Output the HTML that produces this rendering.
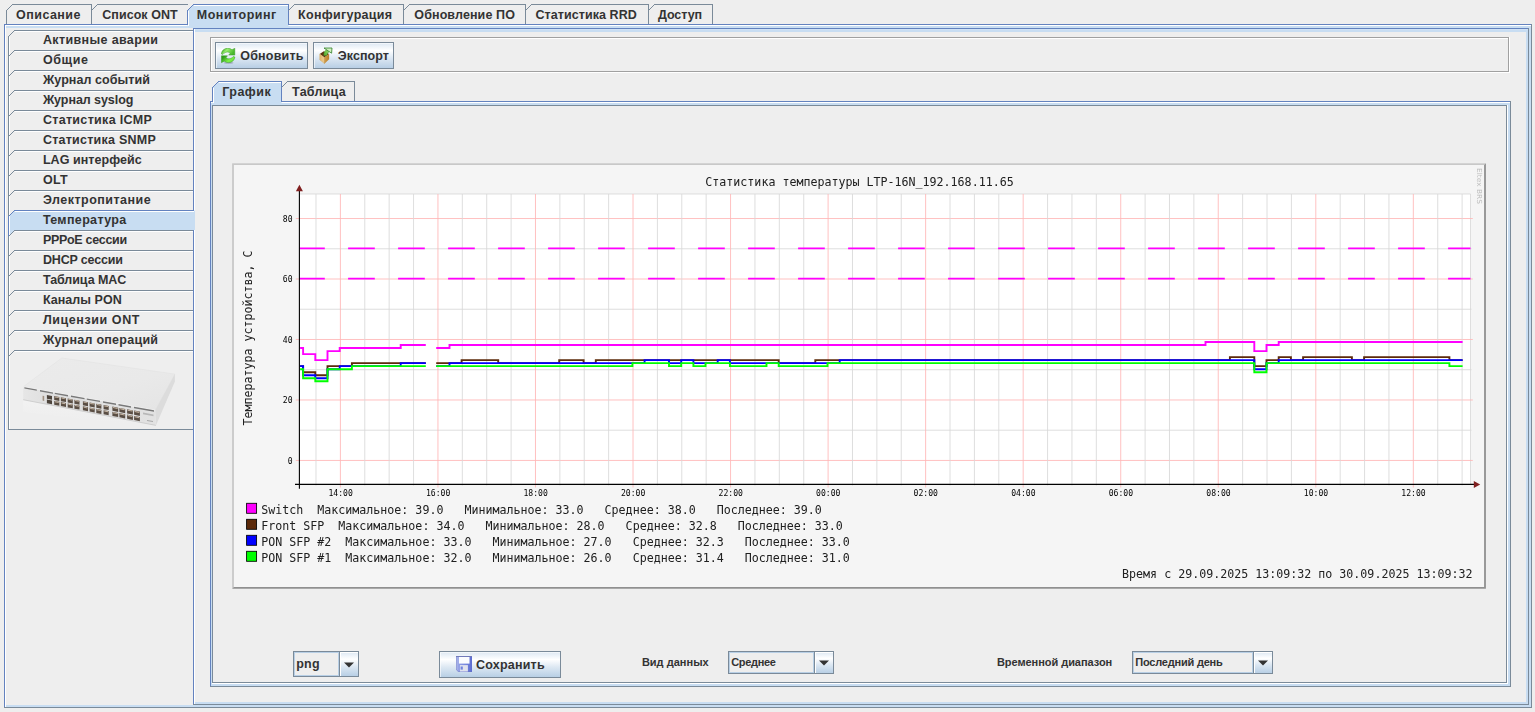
<!DOCTYPE html>
<html lang="ru"><head><meta charset="utf-8"><title>LTP-16N</title>
<style>
html,body{margin:0;padding:0}
body{width:1535px;height:712px;background:#eeeeee;position:relative;overflow:hidden;font-family:"Liberation Sans",sans-serif;color:#333333;font-weight:bold;font-size:12.5px}
div,span,svg{position:absolute;box-sizing:border-box}
.t{white-space:nowrap;line-height:16px;height:16px}
.s{font-size:11px}
.btn{border:1px solid #7a8a99;background:linear-gradient(to bottom,#dde8f3 0%,#ffffff 30%,#dde8f3 60%,#b8cfe5 100%);box-shadow:inset 1px 1px 0 rgba(255,255,255,.6)}
.cb{border:1px solid #7a8a99;background:#eeeeee;box-shadow:inset 1px 1px 0 #b8cfe5, inset -1px -1px 0 #b8cfe5}
.cba{border-left:1px solid #7a8a99;background:linear-gradient(to bottom,#dde8f3 0%,#ffffff 30%,#dde8f3 60%,#b8cfe5 100%);box-shadow:inset 1px 1px 0 #ffffff}
</style></head>
<body>
<div style="left:4px;top:24px;width:1528px;height:684px;background:#c8ddf2;"></div>
<div style="left:4px;top:24px;width:1528px;height:1px;background:#6382bf;"></div>
<div style="left:4px;top:24px;width:1px;height:684px;background:#6382bf;"></div>
<div style="left:1531px;top:24px;width:1px;height:684px;background:#7a8a99;"></div>
<div style="left:4px;top:707px;width:1528px;height:1px;background:#7a8a99;"></div>
<div style="left:5px;top:25px;width:1526px;height:1px;background:#ffffff;"></div>
<div style="left:5px;top:25px;width:1px;height:682px;background:#ffffff;"></div>
<div style="left:6px;top:28px;width:1523px;height:677px;background:#eeeeee;"></div>
<div style="left:193px;top:28px;width:1336px;height:677px;background:#c8ddf2;"></div>
<div style="left:193px;top:28px;width:1336px;height:1px;background:#6382bf;"></div>
<div style="left:193px;top:28px;width:1px;height:677px;background:#6382bf;"></div>
<div style="left:1528px;top:28px;width:1px;height:677px;background:#7a8a99;"></div>
<div style="left:193px;top:704px;width:1336px;height:1px;background:#7a8a99;"></div>
<div style="left:194px;top:29px;width:1px;height:675px;background:#ffffff;"></div>
<div style="left:195px;top:29px;width:1333px;height:1px;background:#d0e2f5;"></div>
<div style="left:195px;top:32px;width:1331px;height:670px;background:#eeeeee;"></div>
<svg width="1535" height="712" style="left:0;top:0" viewBox="0 0 1535 712"><polygon points="187.5,28 187.5,10.5 193.5,4.5 288.5,4.5 288.5,28" fill="#c8ddf2"/><line x1="6.5" y1="10.5" x2="12.5" y2="4.5" stroke="#7a8a99"/><line x1="12" y1="4.5" x2="92" y2="4.5" stroke="#7a8a99" shape-rendering="crispEdges"/><line x1="6.5" y1="10" x2="6.5" y2="24" stroke="#7a8a99" shape-rendering="crispEdges"/><line x1="91.5" y1="4" x2="91.5" y2="24" stroke="#7a8a99" shape-rendering="crispEdges"/><line x1="91.5" y1="10.5" x2="97.5" y2="4.5" stroke="#7a8a99"/><line x1="97" y1="4.5" x2="188" y2="4.5" stroke="#7a8a99" shape-rendering="crispEdges"/><line x1="187.5" y1="10.5" x2="193.5" y2="4.5" stroke="#6382bf"/><line x1="193" y1="4.5" x2="289" y2="4.5" stroke="#6382bf" shape-rendering="crispEdges"/><line x1="187.5" y1="10" x2="187.5" y2="25" stroke="#6382bf" shape-rendering="crispEdges"/><line x1="288.5" y1="4" x2="288.5" y2="25" stroke="#6382bf" shape-rendering="crispEdges"/><line x1="188.5" y1="11" x2="188.5" y2="26" stroke="#ffffff" shape-rendering="crispEdges"/><line x1="194" y1="5.5" x2="288" y2="5.5" stroke="#ffffff" shape-rendering="crispEdges"/><line x1="288.5" y1="10.5" x2="294.5" y2="4.5" stroke="#7a8a99"/><line x1="294" y1="4.5" x2="404" y2="4.5" stroke="#7a8a99" shape-rendering="crispEdges"/><line x1="403.5" y1="4" x2="403.5" y2="24" stroke="#7a8a99" shape-rendering="crispEdges"/><line x1="403.5" y1="10.5" x2="409.5" y2="4.5" stroke="#7a8a99"/><line x1="409" y1="4.5" x2="526" y2="4.5" stroke="#7a8a99" shape-rendering="crispEdges"/><line x1="525.5" y1="4" x2="525.5" y2="24" stroke="#7a8a99" shape-rendering="crispEdges"/><line x1="525.5" y1="10.5" x2="531.5" y2="4.5" stroke="#7a8a99"/><line x1="531" y1="4.5" x2="649" y2="4.5" stroke="#7a8a99" shape-rendering="crispEdges"/><line x1="648.5" y1="4" x2="648.5" y2="24" stroke="#7a8a99" shape-rendering="crispEdges"/><line x1="648.5" y1="10.5" x2="654.5" y2="4.5" stroke="#7a8a99"/><line x1="654" y1="4.5" x2="713" y2="4.5" stroke="#7a8a99" shape-rendering="crispEdges"/><line x1="712.5" y1="4" x2="712.5" y2="24" stroke="#7a8a99" shape-rendering="crispEdges"/><polygon points="8.5,216.5 14.5,210.5 195,210.5 195,230 14.5,230 8.5,236 " fill="#c8ddf2"/><line x1="8.5" y1="36" x2="8.5" y2="430" stroke="#7a8a99" shape-rendering="crispEdges"/><line x1="9.5" y1="37" x2="9.5" y2="429" stroke="#ffffff" shape-rendering="crispEdges"/><line x1="15" y1="31.5" x2="193" y2="31.5" stroke="#ffffff" shape-rendering="crispEdges"/><line x1="8.5" y1="36.5" x2="14.5" y2="30.5" stroke="#7a8a99"/><line x1="14" y1="30.5" x2="193" y2="30.5" stroke="#7a8a99" shape-rendering="crispEdges"/><line x1="15" y1="51.5" x2="193" y2="51.5" stroke="#ffffff" shape-rendering="crispEdges"/><line x1="8.5" y1="56.5" x2="14.5" y2="50.5" stroke="#7a8a99"/><line x1="14" y1="50.5" x2="193" y2="50.5" stroke="#7a8a99" shape-rendering="crispEdges"/><line x1="15" y1="71.5" x2="193" y2="71.5" stroke="#ffffff" shape-rendering="crispEdges"/><line x1="8.5" y1="76.5" x2="14.5" y2="70.5" stroke="#7a8a99"/><line x1="14" y1="70.5" x2="193" y2="70.5" stroke="#7a8a99" shape-rendering="crispEdges"/><line x1="15" y1="91.5" x2="193" y2="91.5" stroke="#ffffff" shape-rendering="crispEdges"/><line x1="8.5" y1="96.5" x2="14.5" y2="90.5" stroke="#7a8a99"/><line x1="14" y1="90.5" x2="193" y2="90.5" stroke="#7a8a99" shape-rendering="crispEdges"/><line x1="15" y1="111.5" x2="193" y2="111.5" stroke="#ffffff" shape-rendering="crispEdges"/><line x1="8.5" y1="116.5" x2="14.5" y2="110.5" stroke="#7a8a99"/><line x1="14" y1="110.5" x2="193" y2="110.5" stroke="#7a8a99" shape-rendering="crispEdges"/><line x1="15" y1="131.5" x2="193" y2="131.5" stroke="#ffffff" shape-rendering="crispEdges"/><line x1="8.5" y1="136.5" x2="14.5" y2="130.5" stroke="#7a8a99"/><line x1="14" y1="130.5" x2="193" y2="130.5" stroke="#7a8a99" shape-rendering="crispEdges"/><line x1="15" y1="151.5" x2="193" y2="151.5" stroke="#ffffff" shape-rendering="crispEdges"/><line x1="8.5" y1="156.5" x2="14.5" y2="150.5" stroke="#7a8a99"/><line x1="14" y1="150.5" x2="193" y2="150.5" stroke="#7a8a99" shape-rendering="crispEdges"/><line x1="15" y1="171.5" x2="193" y2="171.5" stroke="#ffffff" shape-rendering="crispEdges"/><line x1="8.5" y1="176.5" x2="14.5" y2="170.5" stroke="#7a8a99"/><line x1="14" y1="170.5" x2="193" y2="170.5" stroke="#7a8a99" shape-rendering="crispEdges"/><line x1="15" y1="191.5" x2="193" y2="191.5" stroke="#ffffff" shape-rendering="crispEdges"/><line x1="8.5" y1="196.5" x2="14.5" y2="190.5" stroke="#7a8a99"/><line x1="14" y1="190.5" x2="193" y2="190.5" stroke="#7a8a99" shape-rendering="crispEdges"/><line x1="15" y1="211.5" x2="194" y2="211.5" stroke="#ffffff" shape-rendering="crispEdges"/><line x1="8.5" y1="216" x2="8.5" y2="237" stroke="#6382bf" shape-rendering="crispEdges"/><line x1="9.5" y1="217" x2="9.5" y2="235" stroke="#ffffff" shape-rendering="crispEdges"/><line x1="8.5" y1="216.5" x2="14.5" y2="210.5" stroke="#6382bf"/><line x1="14" y1="210.5" x2="194" y2="210.5" stroke="#6382bf" shape-rendering="crispEdges"/><line x1="15" y1="231.5" x2="193" y2="231.5" stroke="#ffffff" shape-rendering="crispEdges"/><line x1="8.5" y1="236.5" x2="14.5" y2="230.5" stroke="#7a8a99"/><line x1="14" y1="230.5" x2="193" y2="230.5" stroke="#7a8a99" shape-rendering="crispEdges"/><line x1="15" y1="251.5" x2="193" y2="251.5" stroke="#ffffff" shape-rendering="crispEdges"/><line x1="8.5" y1="256.5" x2="14.5" y2="250.5" stroke="#7a8a99"/><line x1="14" y1="250.5" x2="193" y2="250.5" stroke="#7a8a99" shape-rendering="crispEdges"/><line x1="15" y1="271.5" x2="193" y2="271.5" stroke="#ffffff" shape-rendering="crispEdges"/><line x1="8.5" y1="276.5" x2="14.5" y2="270.5" stroke="#7a8a99"/><line x1="14" y1="270.5" x2="193" y2="270.5" stroke="#7a8a99" shape-rendering="crispEdges"/><line x1="15" y1="291.5" x2="193" y2="291.5" stroke="#ffffff" shape-rendering="crispEdges"/><line x1="8.5" y1="296.5" x2="14.5" y2="290.5" stroke="#7a8a99"/><line x1="14" y1="290.5" x2="193" y2="290.5" stroke="#7a8a99" shape-rendering="crispEdges"/><line x1="15" y1="311.5" x2="193" y2="311.5" stroke="#ffffff" shape-rendering="crispEdges"/><line x1="8.5" y1="316.5" x2="14.5" y2="310.5" stroke="#7a8a99"/><line x1="14" y1="310.5" x2="193" y2="310.5" stroke="#7a8a99" shape-rendering="crispEdges"/><line x1="15" y1="331.5" x2="193" y2="331.5" stroke="#ffffff" shape-rendering="crispEdges"/><line x1="8.5" y1="336.5" x2="14.5" y2="330.5" stroke="#7a8a99"/><line x1="14" y1="330.5" x2="193" y2="330.5" stroke="#7a8a99" shape-rendering="crispEdges"/><line x1="15" y1="351.5" x2="193" y2="351.5" stroke="#ffffff" shape-rendering="crispEdges"/><line x1="8.5" y1="356.5" x2="14.5" y2="350.5" stroke="#7a8a99"/><line x1="14" y1="350.5" x2="193" y2="350.5" stroke="#7a8a99" shape-rendering="crispEdges"/><line x1="8" y1="429.5" x2="193" y2="429.5" stroke="#7a8a99" shape-rendering="crispEdges"/></svg>
<span class="t" style="left:16.10px;top:6.67px;letter-spacing:0.450px;">Описание</span>
<span class="t" style="left:102.20px;top:6.67px;letter-spacing:0.063px;">Список ONT</span>
<span class="t" style="left:196.80px;top:6.67px;letter-spacing:0.505px;">Мониторинг</span>
<span class="t" style="left:298.10px;top:6.67px;letter-spacing:0.301px;">Конфигурация</span>
<span class="t" style="left:414.30px;top:6.67px;letter-spacing:0.112px;">Обновление ПО</span>
<span class="t" style="left:535.40px;top:6.67px;letter-spacing:0.076px;">Статистика RRD</span>
<span class="t" style="left:657.90px;top:6.67px;letter-spacing:-0.037px;">Доступ</span>
<span class="t" style="left:42.90px;top:31.67px;letter-spacing:0.369px;">Активные аварии</span>
<span class="t" style="left:42.90px;top:51.67px;letter-spacing:0.632px;">Общие</span>
<span class="t" style="left:42.90px;top:71.67px;letter-spacing:0.077px;">Журнал событий</span>
<span class="t" style="left:42.90px;top:91.67px;letter-spacing:-0.065px;">Журнал syslog</span>
<span class="t" style="left:42.90px;top:111.67px;letter-spacing:0.313px;">Статистика ICMP</span>
<span class="t" style="left:42.90px;top:131.67px;letter-spacing:0.242px;">Статистика SNMP</span>
<span class="t" style="left:42.90px;top:151.67px;letter-spacing:0.060px;">LAG интерфейс</span>
<span class="t" style="left:42.90px;top:171.67px;letter-spacing:0.291px;">OLT</span>
<span class="t" style="left:42.90px;top:191.67px;letter-spacing:0.489px;">Электропитание</span>
<span class="t" style="left:42.90px;top:211.67px;letter-spacing:0.341px;">Температура</span>
<span class="t" style="left:42.90px;top:231.67px;letter-spacing:-0.295px;">PPPoE сессии</span>
<span class="t" style="left:42.90px;top:251.67px;letter-spacing:-0.158px;">DHCP сессии</span>
<span class="t" style="left:42.90px;top:271.67px;letter-spacing:-0.068px;">Таблица MAC</span>
<span class="t" style="left:42.90px;top:291.67px;letter-spacing:0.053px;">Каналы PON</span>
<span class="t" style="left:42.90px;top:311.67px;letter-spacing:0.584px;">Лицензии ONT</span>
<span class="t" style="left:42.90px;top:331.67px;letter-spacing:0.265px;">Журнал операций</span>
<svg style="left:10px;top:352px" width="182" height="77" viewBox="10 352 182 77">
<defs><linearGradient id="dtop" x1="0" y1="0" x2="1" y2="1"><stop offset="0" stop-color="#ebebeb"/><stop offset="0.6" stop-color="#e9e9e9"/><stop offset="1" stop-color="#e4e4e4"/></linearGradient><linearGradient id="dfr" x1="0" y1="0" x2="1" y2="0"><stop offset="0" stop-color="#e6e6e6"/><stop offset="0.2" stop-color="#dedede"/><stop offset="1" stop-color="#e2e2e2"/></linearGradient><linearGradient id="drf" x1="0" y1="0" x2="0" y2="1"><stop offset="0" stop-color="#f2f2f2"/><stop offset="1" stop-color="#eeeeee" stop-opacity="0"/></linearGradient></defs>
<polygon points="23.2,400.2 155.9,425.9 155.9,428 23.2,412" fill="url(#drf)"/>
<polygon points="61.8,358 174.9,374.1 155.2,410.2 23.2,386.8" fill="url(#dtop)" stroke="#e2e2e2" stroke-width="0.6"/>
<polygon points="155.2,410.2 174.9,374.1 174.9,381.4 155.9,425.4" fill="#dcdcdc"/>
<polygon points="23.2,386.8 155.2,410.2 155.9,425.4 23.2,399.7" fill="url(#dfr)"/>
<line x1="23.2" y1="386.8" x2="155.2" y2="410.2" stroke="#f4f4f4" stroke-width="0.7"/>
<line x1="23.2" y1="399.7" x2="155.9" y2="425.4" stroke="#c4c4c4" stroke-width="0.7"/>
<polygon points="24.4,387.3 36.8,389.5 36.8,390.8 24.4,388.6" fill="#787878"/>
<polygon points="40.0,390.0 53.0,392.4 53.0,393.7 40.0,391.4" fill="#787878"/>
<polygon points="54.8,392.7 68.0,395.0 68.0,396.4 54.8,394.0" fill="#787878"/>
<polygon points="71.0,395.5 84.5,397.9 84.5,399.3 71.0,396.9" fill="#787878"/>
<polygon points="86.8,398.4 100.0,400.7 100.0,402.1 86.8,399.7" fill="#787878"/>
<polygon points="103.0,401.2 116.0,403.5 116.0,405.0 103.0,402.7" fill="#787878"/>
<polygon points="118.5,404.0 131.0,406.2 131.0,407.7 118.5,405.4" fill="#787878"/>
<polygon points="134.0,406.7 154.0,410.3 154.0,411.8 134.0,408.2" fill="#787878"/>
<polygon points="42.6,395.8 44.2,396.1 44.2,400.9 42.6,400.5" fill="#a09080"/>
<polygon points="46.9,395.0 52.0,395.9 52.0,399.7 46.9,398.7" fill="#4d443c"/>
<polygon points="46.9,399.5 52.0,400.5 52.0,404.2 46.9,403.2" fill="#4d443c"/>
<polygon points="54.2,396.0 59.3,397.0 59.3,400.9 54.2,399.9" fill="#5a4e44"/>
<polygon points="54.8,396.4 58.7,397.1 58.7,398.1 54.8,397.4" fill="#c8b8a6"/>
<polygon points="54.2,400.9 59.3,401.8 59.3,405.7 54.2,404.8" fill="#5a4e44"/>
<polygon points="54.8,401.3 58.7,402.0 58.7,402.9 54.8,402.2" fill="#c8b8a6"/>
<polygon points="60.9,397.3 66.0,398.2 66.0,402.1 60.9,401.2" fill="#5a4e44"/>
<polygon points="61.5,397.6 65.4,398.4 65.4,399.3 61.5,398.6" fill="#c8b8a6"/>
<polygon points="60.9,402.1 66.0,403.1 66.0,407.0 60.9,406.1" fill="#5a4e44"/>
<polygon points="61.5,402.5 65.4,403.3 65.4,404.2 61.5,403.5" fill="#c8b8a6"/>
<polygon points="67.7,398.5 72.8,399.4 72.8,403.4 67.7,402.5" fill="#5a4e44"/>
<polygon points="68.3,398.9 72.2,399.6 72.2,400.6 68.3,399.8" fill="#c8b8a6"/>
<polygon points="67.7,403.4 72.8,404.4 72.8,408.3 67.7,407.4" fill="#5a4e44"/>
<polygon points="68.3,403.8 72.2,404.5 72.2,405.5 68.3,404.8" fill="#c8b8a6"/>
<polygon points="74.4,399.7 79.5,400.7 79.5,404.7 74.4,403.7" fill="#5a4e44"/>
<polygon points="75.0,400.1 78.9,400.8 78.9,401.8 75.0,401.1" fill="#c8b8a6"/>
<polygon points="74.4,404.7 79.5,405.6 79.5,409.6 74.4,408.7" fill="#5a4e44"/>
<polygon points="75.0,405.1 78.9,405.8 78.9,406.8 75.0,406.0" fill="#c8b8a6"/>
<polygon points="82.9,401.3 88.0,402.2 88.0,406.2 82.9,405.3" fill="#5a4e44"/>
<polygon points="83.5,401.7 87.4,402.4 87.4,403.3 83.5,402.6" fill="#c8b8a6"/>
<polygon points="82.9,406.3 88.0,407.2 88.0,411.3 82.9,410.3" fill="#5a4e44"/>
<polygon points="83.5,406.7 87.4,407.4 87.4,408.4 83.5,407.6" fill="#c8b8a6"/>
<polygon points="89.6,402.5 94.7,403.4 94.7,407.5 89.6,406.5" fill="#5a4e44"/>
<polygon points="90.2,402.9 94.1,403.6 94.1,404.6 90.2,403.9" fill="#c8b8a6"/>
<polygon points="89.6,407.5 94.7,408.5 94.7,412.6 89.6,411.6" fill="#5a4e44"/>
<polygon points="90.2,407.9 94.1,408.6 94.1,409.6 90.2,408.9" fill="#c8b8a6"/>
<polygon points="96.3,403.7 101.4,404.6 101.4,408.7 96.3,407.8" fill="#5a4e44"/>
<polygon points="96.9,404.1 100.8,404.8 100.8,405.8 96.9,405.1" fill="#c8b8a6"/>
<polygon points="96.3,408.8 101.4,409.7 101.4,413.9 96.3,412.9" fill="#5a4e44"/>
<polygon points="96.9,409.2 100.8,409.9 100.8,410.9 96.9,410.2" fill="#c8b8a6"/>
<polygon points="103.6,405.0 108.7,406.0 108.7,410.1 103.6,409.2" fill="#5a4e44"/>
<polygon points="104.2,405.4 108.1,406.1 108.1,407.1 104.2,406.4" fill="#c8b8a6"/>
<polygon points="103.6,410.2 108.7,411.1 108.7,415.3 103.6,414.3" fill="#5a4e44"/>
<polygon points="104.2,410.5 108.1,411.3 108.1,412.3 104.2,411.5" fill="#c8b8a6"/>
<polygon points="112.4,406.6 118.2,407.7 118.2,411.9 112.4,410.8" fill="#5a4e44"/>
<polygon points="113.0,407.0 117.6,407.9 117.6,408.9 113.0,408.0" fill="#c8b8a6"/>
<polygon points="112.4,411.8 118.2,412.9 118.2,417.1 112.4,416.0" fill="#5a4e44"/>
<polygon points="113.0,412.2 117.6,413.1 117.6,414.1 113.0,413.2" fill="#c8b8a6"/>
<polygon points="119.4,407.9 125.2,409.0 125.2,413.2 119.4,412.1" fill="#5a4e44"/>
<polygon points="120.0,408.3 124.6,409.1 124.6,410.2 120.0,409.3" fill="#c8b8a6"/>
<polygon points="119.4,413.1 125.2,414.2 125.2,418.4 119.4,417.3" fill="#5a4e44"/>
<polygon points="120.0,413.5 124.6,414.4 124.6,415.4 120.0,414.5" fill="#c8b8a6"/>
<polygon points="127.1,409.3 132.9,410.4 132.9,414.6 127.1,413.5" fill="#5a4e44"/>
<polygon points="127.7,409.7 132.3,410.5 132.3,411.6 127.7,410.7" fill="#c8b8a6"/>
<polygon points="127.1,414.6 132.9,415.7 132.9,419.9 127.1,418.8" fill="#5a4e44"/>
<polygon points="127.7,415.0 132.3,415.8 132.3,416.9 127.7,416.0" fill="#c8b8a6"/>
<polygon points="134.1,410.6 139.9,411.6 139.9,415.9 134.1,414.8" fill="#5a4e44"/>
<polygon points="134.7,411.0 139.3,411.8 139.3,412.9 134.7,412.0" fill="#c8b8a6"/>
<polygon points="134.1,415.9 139.9,417.0 139.9,421.3 134.1,420.1" fill="#5a4e44"/>
<polygon points="134.7,416.3 139.3,417.2 139.3,418.2 134.7,417.3" fill="#c8b8a6"/>
<polygon points="143.0,412.5 153.5,414.4 153.5,416.2 143.0,414.3" fill="#b8b8b8"/>
<polygon points="147.0,419.9 153.0,421.1 153.0,422.1 147.0,421.0" fill="#a8a8a8"/>
</svg>
<div style="left:210px;top:37px;width:1299px;height:35px;background:transparent;border:1px solid #a0a0a0"></div>
<div style="left:211px;top:38px;width:1297px;height:1px;background:#ffffff;"></div>
<div style="left:211px;top:38px;width:1px;height:33px;background:#ffffff;"></div>
<div style="left:1509px;top:37px;width:1px;height:36px;background:#ffffff;"></div>
<div style="left:210px;top:72px;width:1300px;height:1px;background:#ffffff;"></div>
<div class="btn" style="left:215px;top:42px;width:93px;height:27px"></div>
<div class="btn" style="left:313px;top:42px;width:81px;height:27px"></div>
<svg style="left:221px;top:47.7px" width="16" height="16" viewBox="0 0 16 16"><defs>
<linearGradient id="gr1" x1="0" y1="0" x2="1" y2="0.35"><stop offset="0" stop-color="#2f9a1c"/><stop offset="0.45" stop-color="#9af06e"/><stop offset="1" stop-color="#48b82c"/></linearGradient>
<linearGradient id="gr2" x1="0" y1="0" x2="1" y2="0.5"><stop offset="0" stop-color="#6cd848"/><stop offset="0.5" stop-color="#7cf244"/><stop offset="1" stop-color="#319c1c"/></linearGradient></defs>
<ellipse cx="7.6" cy="14.9" rx="4.8" ry="0.8" fill="#6a6080" opacity="0.4"/>
<path d="M0.3 5.9 C0.8 2.5 3.2 0.3 6.6 0.3 C8.4 0.3 9.9 0.8 11 1.7 L13.8 0.2 L13.8 7.1 L7.7 7.1 L9.2 5.3 C8.5 4.5 7.6 4.1 6.5 4.1 C4.6 4.1 3.1 4.9 1.9 6.4 Z" fill="url(#gr1)" stroke="#2e9420" stroke-width="0.45"/>
<path d="M0.3 5.9 C0.8 2.5 3.2 0.3 6.6 0.3 C8.4 0.3 9.9 0.8 11 1.7 L13.8 0.2 L13.8 7.1 L7.7 7.1 L9.2 5.3 C8.5 4.5 7.6 4.1 6.5 4.1 C4.6 4.1 3.1 4.9 1.9 6.4 Z" transform="rotate(180 7.1 7.45)" fill="url(#gr2)" stroke="#2e9420" stroke-width="0.45"/></svg>
<span class="t" style="left:240.20px;top:47.67px;letter-spacing:0.223px;">Обновить</span>
<svg style="left:318px;top:47px" width="17" height="18" viewBox="318 47 17 18"><defs>
<linearGradient id="bxl" x1="0" y1="0" x2="1" y2="0"><stop offset="0" stop-color="#e2b46c"/><stop offset="1" stop-color="#efcf92"/></linearGradient>
<linearGradient id="bxr" x1="0" y1="0" x2="1" y2="0"><stop offset="0" stop-color="#d39c48"/><stop offset="1" stop-color="#b87f2c"/></linearGradient>
<linearGradient id="arw" x1="0" y1="1" x2="1" y2="0"><stop offset="0" stop-color="#4ea82c"/><stop offset="1" stop-color="#9ade70"/></linearGradient></defs>
<polygon points="319.7,54.1 323.8,51.15 329,54.1 324.45,57.5" fill="#5e3410"/>
<path d="M323.8 55.6 C323.7 53.2 324.4 51.2 326.1 49.7 L329.3 51.8 C327.8 52.8 327 54 326.8 55.6 Z" fill="url(#arw)" stroke="#3f932c" stroke-width="0.4"/>
<polygon points="319.7,54.1 324.45,57.5 324.45,63.5 319.7,59.85" fill="url(#bxl)" stroke="#c49848" stroke-width="0.3"/>
<polygon points="324.45,57.5 329,54.1 329,59.2 324.45,63.5" fill="url(#bxr)" stroke="#b88430" stroke-width="0.3"/>
<polygon points="324,48.05 332,48 331.6,53.2" fill="#d4f2c0" stroke="#2f7f28" stroke-width="0.8" stroke-linejoin="miter"/></svg>
<span class="t" style="left:337.80px;top:47.67px;letter-spacing:0.069px;">Экспорт</span>
<div style="left:210px;top:101px;width:1301px;height:586px;background:#c8ddf2;"></div>
<div style="left:210px;top:101px;width:1301px;height:1px;background:#6382bf;"></div>
<div style="left:210px;top:101px;width:1px;height:586px;background:#6382bf;"></div>
<div style="left:1510px;top:101px;width:1px;height:586px;background:#7a8a99;"></div>
<div style="left:210px;top:686px;width:1301px;height:1px;background:#7a8a99;"></div>
<div style="left:211px;top:102px;width:1299px;height:1px;background:#ffffff;"></div>
<div style="left:212px;top:105px;width:1296px;height:579px;background:#ffffff;"></div>
<div style="left:212px;top:105px;width:1295px;height:578px;background:#7a8a99;"></div>
<div style="left:213px;top:106px;width:1293px;height:576px;background:#eeeeee;"></div>
<svg width="1535" height="712" style="left:0;top:0" viewBox="0 0 1535 712"><polygon points="212.5,105 212.5,87.5 218.5,81.5 281.5,81.5 281.5,105" fill="#c8ddf2"/><line x1="212.5" y1="87.5" x2="218.5" y2="81.5" stroke="#6382bf"/><line x1="218" y1="81.5" x2="282" y2="81.5" stroke="#6382bf" shape-rendering="crispEdges"/><line x1="212.5" y1="87" x2="212.5" y2="102" stroke="#6382bf" shape-rendering="crispEdges"/><line x1="281.5" y1="81" x2="281.5" y2="102" stroke="#6382bf" shape-rendering="crispEdges"/><line x1="213.5" y1="88" x2="213.5" y2="103" stroke="#ffffff" shape-rendering="crispEdges"/><line x1="219" y1="82.5" x2="281" y2="82.5" stroke="#ffffff" shape-rendering="crispEdges"/><line x1="281.5" y1="87.5" x2="287.5" y2="81.5" stroke="#7a8a99"/><line x1="287" y1="81.5" x2="355" y2="81.5" stroke="#7a8a99" shape-rendering="crispEdges"/><line x1="354.5" y1="81" x2="354.5" y2="101" stroke="#7a8a99" shape-rendering="crispEdges"/></svg>
<div style="left:212px;top:105px;width:1295px;height:1px;background:#7a8a99;"></div>
<span class="t" style="left:222.30px;top:83.67px;letter-spacing:0.454px;">График</span>
<span class="t" style="left:292.10px;top:83.67px;letter-spacing:0.242px;">Таблица</span>
<svg style="left:232px;top:163px;will-change:transform" width="1254" height="426" viewBox="232 163 1254 426" font-family="'DejaVu Sans Mono','Liberation Mono',monospace" font-weight="normal">
<defs><clipPath id="plotclip"><rect x="299.5" y="194.0" width="1171.0" height="290.5"/></clipPath></defs>
<rect x="232.1" y="163.2" width="1253.8" height="425.5" fill="#f5f5f5"/>
<polygon points="232.1,163.2 1485.8999999999999,163.2 1484.1,165.0 233.9,165.0 233.9,586.9000000000001 232.1,588.7" fill="#c8c8c8"/>
<polygon points="1485.8999999999999,163.2 1485.8999999999999,588.7 232.1,588.7 233.9,586.9000000000001 1484.1,586.9000000000001 1484.1,165.0" fill="#909090"/>
<rect x="299.5" y="194.0" width="1171.0" height="290.5" fill="#ffffff"/>
<line x1="299.5" y1="194.0" x2="1470.5" y2="194.0" stroke="#d8d8d8" stroke-width="0.85"/>
<line x1="1470.5" y1="194.0" x2="1470.5" y2="484.5" stroke="#d8d8d8" stroke-width="0.85"/>
<line x1="295.8" y1="460.45" x2="1472.8" y2="460.45" stroke="#ffb6b6" stroke-width="0.85"/>
<line x1="299.5" y1="430.21" x2="1471.5" y2="430.21" stroke="#d8d8d8" stroke-width="0.85"/>
<line x1="295.8" y1="399.97" x2="1472.8" y2="399.97" stroke="#ffb6b6" stroke-width="0.85"/>
<line x1="299.5" y1="369.73" x2="1471.5" y2="369.73" stroke="#d8d8d8" stroke-width="0.85"/>
<line x1="295.8" y1="339.49" x2="1472.8" y2="339.49" stroke="#ffb6b6" stroke-width="0.85"/>
<line x1="299.5" y1="309.25" x2="1471.5" y2="309.25" stroke="#d8d8d8" stroke-width="0.85"/>
<line x1="295.8" y1="279.01" x2="1472.8" y2="279.01" stroke="#ffb6b6" stroke-width="0.85"/>
<line x1="299.5" y1="248.77" x2="1471.5" y2="248.77" stroke="#d8d8d8" stroke-width="0.85"/>
<line x1="295.8" y1="218.53" x2="1472.8" y2="218.53" stroke="#ffb6b6" stroke-width="0.85"/>
<line x1="316.01" y1="194.0" x2="316.01" y2="485.6" stroke="#d8d8d8" stroke-width="0.85"/>
<line x1="340.40" y1="194.0" x2="340.40" y2="487.5" stroke="#ffb6b6" stroke-width="0.85"/>
<line x1="364.78" y1="194.0" x2="364.78" y2="485.6" stroke="#d8d8d8" stroke-width="0.85"/>
<line x1="389.17" y1="194.0" x2="389.17" y2="485.6" stroke="#d8d8d8" stroke-width="0.85"/>
<line x1="413.55" y1="194.0" x2="413.55" y2="485.6" stroke="#d8d8d8" stroke-width="0.85"/>
<line x1="437.94" y1="194.0" x2="437.94" y2="487.5" stroke="#ffb6b6" stroke-width="0.85"/>
<line x1="462.32" y1="194.0" x2="462.32" y2="485.6" stroke="#d8d8d8" stroke-width="0.85"/>
<line x1="486.71" y1="194.0" x2="486.71" y2="485.6" stroke="#d8d8d8" stroke-width="0.85"/>
<line x1="511.10" y1="194.0" x2="511.10" y2="485.6" stroke="#d8d8d8" stroke-width="0.85"/>
<line x1="535.48" y1="194.0" x2="535.48" y2="487.5" stroke="#ffb6b6" stroke-width="0.85"/>
<line x1="559.87" y1="194.0" x2="559.87" y2="485.6" stroke="#d8d8d8" stroke-width="0.85"/>
<line x1="584.25" y1="194.0" x2="584.25" y2="485.6" stroke="#d8d8d8" stroke-width="0.85"/>
<line x1="608.63" y1="194.0" x2="608.63" y2="485.6" stroke="#d8d8d8" stroke-width="0.85"/>
<line x1="633.02" y1="194.0" x2="633.02" y2="487.5" stroke="#ffb6b6" stroke-width="0.85"/>
<line x1="657.40" y1="194.0" x2="657.40" y2="485.6" stroke="#d8d8d8" stroke-width="0.85"/>
<line x1="681.79" y1="194.0" x2="681.79" y2="485.6" stroke="#d8d8d8" stroke-width="0.85"/>
<line x1="706.17" y1="194.0" x2="706.17" y2="485.6" stroke="#d8d8d8" stroke-width="0.85"/>
<line x1="730.56" y1="194.0" x2="730.56" y2="487.5" stroke="#ffb6b6" stroke-width="0.85"/>
<line x1="754.94" y1="194.0" x2="754.94" y2="485.6" stroke="#d8d8d8" stroke-width="0.85"/>
<line x1="779.33" y1="194.0" x2="779.33" y2="485.6" stroke="#d8d8d8" stroke-width="0.85"/>
<line x1="803.72" y1="194.0" x2="803.72" y2="485.6" stroke="#d8d8d8" stroke-width="0.85"/>
<line x1="828.10" y1="194.0" x2="828.10" y2="487.5" stroke="#ffb6b6" stroke-width="0.85"/>
<line x1="852.49" y1="194.0" x2="852.49" y2="485.6" stroke="#d8d8d8" stroke-width="0.85"/>
<line x1="876.87" y1="194.0" x2="876.87" y2="485.6" stroke="#d8d8d8" stroke-width="0.85"/>
<line x1="901.25" y1="194.0" x2="901.25" y2="485.6" stroke="#d8d8d8" stroke-width="0.85"/>
<line x1="925.64" y1="194.0" x2="925.64" y2="487.5" stroke="#ffb6b6" stroke-width="0.85"/>
<line x1="950.02" y1="194.0" x2="950.02" y2="485.6" stroke="#d8d8d8" stroke-width="0.85"/>
<line x1="974.41" y1="194.0" x2="974.41" y2="485.6" stroke="#d8d8d8" stroke-width="0.85"/>
<line x1="998.80" y1="194.0" x2="998.80" y2="485.6" stroke="#d8d8d8" stroke-width="0.85"/>
<line x1="1023.18" y1="194.0" x2="1023.18" y2="487.5" stroke="#ffb6b6" stroke-width="0.85"/>
<line x1="1047.57" y1="194.0" x2="1047.57" y2="485.6" stroke="#d8d8d8" stroke-width="0.85"/>
<line x1="1071.95" y1="194.0" x2="1071.95" y2="485.6" stroke="#d8d8d8" stroke-width="0.85"/>
<line x1="1096.34" y1="194.0" x2="1096.34" y2="485.6" stroke="#d8d8d8" stroke-width="0.85"/>
<line x1="1120.72" y1="194.0" x2="1120.72" y2="487.5" stroke="#ffb6b6" stroke-width="0.85"/>
<line x1="1145.11" y1="194.0" x2="1145.11" y2="485.6" stroke="#d8d8d8" stroke-width="0.85"/>
<line x1="1169.49" y1="194.0" x2="1169.49" y2="485.6" stroke="#d8d8d8" stroke-width="0.85"/>
<line x1="1193.88" y1="194.0" x2="1193.88" y2="485.6" stroke="#d8d8d8" stroke-width="0.85"/>
<line x1="1218.26" y1="194.0" x2="1218.26" y2="487.5" stroke="#ffb6b6" stroke-width="0.85"/>
<line x1="1242.64" y1="194.0" x2="1242.64" y2="485.6" stroke="#d8d8d8" stroke-width="0.85"/>
<line x1="1267.03" y1="194.0" x2="1267.03" y2="485.6" stroke="#d8d8d8" stroke-width="0.85"/>
<line x1="1291.41" y1="194.0" x2="1291.41" y2="485.6" stroke="#d8d8d8" stroke-width="0.85"/>
<line x1="1315.80" y1="194.0" x2="1315.80" y2="487.5" stroke="#ffb6b6" stroke-width="0.85"/>
<line x1="1340.18" y1="194.0" x2="1340.18" y2="485.6" stroke="#d8d8d8" stroke-width="0.85"/>
<line x1="1364.57" y1="194.0" x2="1364.57" y2="485.6" stroke="#d8d8d8" stroke-width="0.85"/>
<line x1="1388.95" y1="194.0" x2="1388.95" y2="485.6" stroke="#d8d8d8" stroke-width="0.85"/>
<line x1="1413.34" y1="194.0" x2="1413.34" y2="487.5" stroke="#ffb6b6" stroke-width="0.85"/>
<line x1="1437.72" y1="194.0" x2="1437.72" y2="485.6" stroke="#d8d8d8" stroke-width="0.85"/>
<line x1="1462.11" y1="194.0" x2="1462.11" y2="485.6" stroke="#d8d8d8" stroke-width="0.85"/>
<g clip-path="url(#plotclip)"><line x1="298.1" y1="248.37" x2="1475" y2="248.37" stroke="#ff00ff" stroke-width="1.9" stroke-dasharray="26.7 23.3"/></g>
<g clip-path="url(#plotclip)"><line x1="298.1" y1="278.61" x2="1475" y2="278.61" stroke="#ff00ff" stroke-width="1.9" stroke-dasharray="26.7 23.3"/></g>
<polyline fill="none" stroke="#ff00ff" stroke-width="1.9" stroke-linecap="butt" stroke-linejoin="miter" points="300.1,348.0 303.1,348.0 303.1,354.1 315.3,354.1 315.3,360.1 327.5,360.1 327.5,351.1 339.7,351.1 339.7,348.0 400.7,348.0 400.7,345.0 425.8,345.0"/>
<polyline fill="none" stroke="#ff00ff" stroke-width="1.9" stroke-linecap="butt" stroke-linejoin="miter" points="436.2,348.0 449.5,348.0 449.5,345.0 1205.5,345.0 1205.5,342.0 1254.3,342.0 1254.3,351.1 1266.5,351.1 1266.5,345.0 1278.7,345.0 1278.7,342.0 1462.6,342.0"/>
<polyline fill="none" stroke="#5c2a0a" stroke-width="1.9" stroke-linecap="butt" stroke-linejoin="miter" points="300.1,366.1 303.1,366.1 303.1,372.2 315.3,372.2 315.3,375.2 327.5,375.2 327.5,366.1 351.9,366.1 351.9,363.1 425.8,363.1"/>
<polyline fill="none" stroke="#5c2a0a" stroke-width="1.9" stroke-linecap="butt" stroke-linejoin="miter" points="436.2,363.1 461.6,363.1 461.6,360.1 498.2,360.1 498.2,363.1 559.2,363.1 559.2,360.1 583.6,360.1 583.6,363.1 595.8,363.1 595.8,360.1 778.7,360.1 778.7,363.1 815.3,363.1 815.3,360.1 1229.9,360.1 1229.9,357.1 1254.3,357.1 1254.3,366.1 1266.5,366.1 1266.5,360.1 1278.7,360.1 1278.7,357.1 1290.9,357.1 1290.9,360.1 1303.1,360.1 1303.1,357.1 1351.9,357.1 1351.9,360.1 1364.1,360.1 1364.1,357.1 1449.4,357.1 1449.4,360.1 1462.6,360.1"/>
<polyline fill="none" stroke="#0000ff" stroke-width="1.9" stroke-linecap="butt" stroke-linejoin="miter" points="300.1,366.1 303.1,366.1 303.1,375.2 315.3,375.2 315.3,378.2 327.5,378.2 327.5,369.2 339.7,369.2 339.7,366.1 400.7,366.1 400.7,363.1 425.8,363.1"/>
<polyline fill="none" stroke="#0000ff" stroke-width="1.9" stroke-linecap="butt" stroke-linejoin="miter" points="436.2,366.1 449.5,366.1 449.5,363.1 644.6,363.1 644.6,360.1 669.0,360.1 669.0,363.1 681.2,363.1 681.2,360.1 693.4,360.1 693.4,363.1 717.7,363.1 717.7,360.1 729.9,360.1 729.9,363.1 839.7,363.1 839.7,360.1 1254.3,360.1 1254.3,369.2 1266.5,369.2 1266.5,363.1 1278.7,363.1 1278.7,360.1 1462.6,360.1"/>
<polyline fill="none" stroke="#00ff00" stroke-width="1.9" stroke-linecap="butt" stroke-linejoin="miter" points="300.1,369.2 303.1,369.2 303.1,378.2 315.3,378.2 315.3,381.2 327.5,381.2 327.5,369.2 351.9,369.2 351.9,366.1 425.8,366.1"/>
<polyline fill="none" stroke="#00ff00" stroke-width="1.9" stroke-linecap="butt" stroke-linejoin="miter" points="436.2,366.1 632.4,366.1 632.4,363.1 669.0,363.1 669.0,366.1 681.2,366.1 681.2,363.1 693.4,363.1 693.4,366.1 705.5,366.1 705.5,363.1 729.9,363.1 729.9,366.1 766.5,366.1 766.5,363.1 778.7,363.1 778.7,366.1 827.5,366.1 827.5,363.1 1254.3,363.1 1254.3,372.2 1266.5,372.2 1266.5,363.1 1449.4,363.1 1449.4,366.1 1462.6,366.1"/>
<line x1="299.4" y1="189" x2="299.4" y2="488.8" stroke="#000" stroke-width="1.1"/>
<line x1="295" y1="484.4" x2="1475" y2="484.4" stroke="#000" stroke-width="1.1"/>
<polygon points="299.4,184.8 295.9,191.2 302.9,191.2" fill="#801f1f"/>
<polygon points="1480.2,484.4 1473.8,480.9 1473.8,487.9" fill="#801f1f"/>
<text x="292.6" y="463.8" font-size="8.1" text-anchor="end" fill="#000">0</text>
<text x="292.6" y="403.4" font-size="8.1" text-anchor="end" fill="#000">20</text>
<text x="292.6" y="342.9" font-size="8.1" text-anchor="end" fill="#000">40</text>
<text x="292.6" y="282.4" font-size="8.1" text-anchor="end" fill="#000">60</text>
<text x="292.6" y="221.9" font-size="8.1" text-anchor="end" fill="#000">80</text>
<text x="340.6" y="496" font-size="8.1" text-anchor="middle" fill="#000">14:00</text>
<text x="438.1" y="496" font-size="8.1" text-anchor="middle" fill="#000">16:00</text>
<text x="535.7" y="496" font-size="8.1" text-anchor="middle" fill="#000">18:00</text>
<text x="633.2" y="496" font-size="8.1" text-anchor="middle" fill="#000">20:00</text>
<text x="730.8" y="496" font-size="8.1" text-anchor="middle" fill="#000">22:00</text>
<text x="828.3" y="496" font-size="8.1" text-anchor="middle" fill="#000">00:00</text>
<text x="925.8" y="496" font-size="8.1" text-anchor="middle" fill="#000">02:00</text>
<text x="1023.4" y="496" font-size="8.1" text-anchor="middle" fill="#000">04:00</text>
<text x="1120.9" y="496" font-size="8.1" text-anchor="middle" fill="#000">06:00</text>
<text x="1218.5" y="496" font-size="8.1" text-anchor="middle" fill="#000">08:00</text>
<text x="1316.0" y="496" font-size="8.1" text-anchor="middle" fill="#000">10:00</text>
<text x="1413.5" y="496" font-size="8.1" text-anchor="middle" fill="#000">12:00</text>
<text x="859.5" y="185.8" font-size="11.65" text-anchor="middle" fill="#202020">Статистика температуры LTP-16N_192.168.11.65</text>
<text transform="translate(251.8,338) rotate(-90)" font-size="11.65" text-anchor="middle" fill="#202020">Температура устройства, C</text>
<rect x="246.6" y="503.3" width="10" height="10" fill="#ff00ff" stroke="#000" stroke-width="0.85"/>
<text x="261.2" y="513.8" font-size="11.65" fill="#202020" xml:space="preserve">Switch  Максимальное: 39.0   Минимальное: 33.0   Среднее: 38.0   Последнее: 39.0</text>
<rect x="246.6" y="519.3" width="10" height="10" fill="#5c2a0a" stroke="#000" stroke-width="0.85"/>
<text x="261.2" y="529.8" font-size="11.65" fill="#202020" xml:space="preserve">Front SFP  Максимальное: 34.0   Минимальное: 28.0   Среднее: 32.8   Последнее: 33.0</text>
<rect x="246.6" y="535.3" width="10" height="10" fill="#0000ff" stroke="#000" stroke-width="0.85"/>
<text x="261.2" y="545.8" font-size="11.65" fill="#202020" xml:space="preserve">PON SFP #2  Максимальное: 33.0   Минимальное: 27.0   Среднее: 32.3   Последнее: 33.0</text>
<rect x="246.6" y="551.3" width="10" height="10" fill="#00ff00" stroke="#000" stroke-width="0.85"/>
<text x="261.2" y="561.8" font-size="11.65" fill="#202020" xml:space="preserve">PON SFP #1  Максимальное: 32.0   Минимальное: 26.0   Среднее: 31.4   Последнее: 31.0</text>
<text x="1472.5" y="577.8" font-size="11.65" text-anchor="end" fill="#202020">Время с 29.09.2025 13:09:32 по 30.09.2025 13:09:32</text>
<text transform="translate(1476.9,168) rotate(90)" font-size="6.9" fill="#bdbdbd" font-family="'DejaVu Sans','Liberation Sans',sans-serif" textLength="36" lengthAdjust="spacingAndGlyphs">Eltex BRS</text>
</svg>
<div class="cb" style="left:293px;top:651px;width:66px;height:26px"></div>
<div class="cba" style="left:339px;top:652px;width:19px;height:24px"></div>
<div style="left:338px;top:652px;width:1px;height:24px;background:#b8cfe5"></div>
<svg style="left:343.0px;top:660.5px" width="12" height="8" viewBox="0 0 12 8"><polygon points="1,1.5 11,1.5 6,6.5" fill="#333333"/></svg>
<span class="t" style="left:296.20px;top:655.67px;letter-spacing:0.259px;">png</span>
<div class="btn" style="left:439px;top:651px;width:122px;height:27px"></div>
<svg style="left:456px;top:656px" width="16" height="16" viewBox="0 0 16 16"><defs><linearGradient id="fl" x1="0" y1="0" x2="1" y2="0"><stop offset="0" stop-color="#b4beee"/><stop offset="0.2" stop-color="#8e9ce4"/><stop offset="0.6" stop-color="#7686de"/><stop offset="1" stop-color="#5c6cd0"/></linearGradient></defs>
<path d="M0 0.2 H16 V16 H2.4 L0 13.6 Z" fill="url(#fl)"/><path d="M0.2 0.2 V13.5 L2.5 15.8 H16" fill="none" stroke="#6a72b8" stroke-width="0.5"/><rect x="0" y="0" width="16" height="0.9" fill="#6c74b4"/>
<rect x="2.9" y="1" width="10.6" height="6.6" fill="#fbfcff"/><rect x="3.9" y="9.1" width="8" height="6.4" fill="#dfe1ee"/><rect x="4.6" y="10.5" width="2.2" height="3.1" fill="#6f82dc"/></svg>
<span class="t" style="left:475.90px;top:656.67px;letter-spacing:0.229px;">Сохранить</span>
<span class="t s" style="left:641.90px;top:654.19px;letter-spacing:0.014px;">Вид данных</span>
<div class="cb" style="left:728px;top:651px;width:106px;height:23px"></div>
<div class="cba" style="left:814px;top:652px;width:19px;height:21px"></div>
<div style="left:813px;top:652px;width:1px;height:21px;background:#b8cfe5"></div>
<svg style="left:818.0px;top:659.0px" width="12" height="8" viewBox="0 0 12 8"><polygon points="1,1.5 11,1.5 6,6.5" fill="#333333"/></svg>
<span class="t s" style="left:731.20px;top:654.19px;letter-spacing:-0.308px;">Среднее</span>
<span class="t s" style="left:996.90px;top:654.19px;letter-spacing:-0.041px;">Временной диапазон</span>
<div class="cb" style="left:1132px;top:651px;width:141px;height:23px"></div>
<div class="cba" style="left:1253px;top:652px;width:19px;height:21px"></div>
<div style="left:1252px;top:652px;width:1px;height:21px;background:#b8cfe5"></div>
<svg style="left:1257.0px;top:659.0px" width="12" height="8" viewBox="0 0 12 8"><polygon points="1,1.5 11,1.5 6,6.5" fill="#333333"/></svg>
<span class="t s" style="left:1135.20px;top:654.19px;letter-spacing:-0.206px;">Последний день</span>
</body></html>
